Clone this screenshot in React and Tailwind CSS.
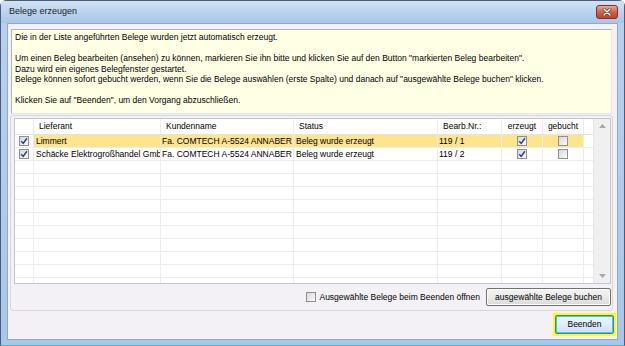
import React from "react";

const rows = [
  {
    lieferant: "Limmert",
    kunde: "Fa. COMTECH A-5524 ANNABER",
    status: "Beleg wurde erzeugt",
    nr: "119 / 1",
    selected: true,
  },
  {
    lieferant: "Schäcke Elektrogroßhandel Gmb",
    kunde: "Fa. COMTECH A-5524 ANNABER",
    status: "Beleg wurde erzeugt",
    nr: "119 / 2",
    selected: false,
  },
];

const emptyRows = [1, 2, 3, 4, 5, 6, 7, 8, 9, 10, 11];

const Check = ({ checked }) => (
  <span className="inline-flex h-[10px] w-[10px] items-center justify-center border border-[#8e8f8f] bg-gradient-to-br from-[#d8d8d8] to-[#fafafa]">
    {checked && (
      <svg viewBox="0 0 8 8" className="h-[8px] w-[8px]">
        <path d="M1.2 4.2 L3.2 6.4 L6.9 1.2" stroke="#24449a" strokeWidth="1.5" fill="none" />
      </svg>
    )}
  </span>
);

const Cell = ({ className, children }) => (
  <div className={"flex h-full shrink-0 items-center overflow-hidden whitespace-nowrap border-r border-[#ececec] " + className}>
    {children}
  </div>
);

const App = () => {
  return (
    <div className="h-[346px] w-[625px] overflow-hidden bg-white font-['Liberation_Sans',Arial,sans-serif] text-[8.5px] text-black">
      <div className="flex h-full w-full flex-col rounded-t-[6px] border border-[#4a5d78] border-b-[#3fb3c9] bg-gradient-to-b from-[#b9d1ee] to-[#a9c6ea]">
        {/* title bar */}
        <div className="flex h-[22px] shrink-0 items-center justify-between bg-gradient-to-b from-[#d3e2f4] via-[#bcd3ef] to-[#a9c5e8] pl-[8px] pr-[6px]">
          <span className="text-[9px] text-[#1b1b1b]">Belege erzeugen</span>
          <div className="flex h-[14px] w-[22px] items-center justify-center rounded-[3px] border border-[#7a3327] bg-gradient-to-b from-[#e9a99b] via-[#d2604b] to-[#c0432e]">
            <svg viewBox="0 0 10 8" className="h-[8px] w-[10px]">
              <path d="M2 1 L8 7 M8 1 L2 7" stroke="#5a2a22" strokeWidth="2.6" strokeLinecap="round" />
              <path d="M2 1 L8 7 M8 1 L2 7" stroke="#ffffff" strokeWidth="1.5" strokeLinecap="round" />
            </svg>
          </div>
        </div>

        {/* client area */}
        <div className="mx-[6px] mb-[5px] flex flex-1 flex-col border border-[#8fa9c9] bg-[#f4f1f6]">
          {/* info box */}
          <div className="ml-[3px] mt-[5px] h-[85px] w-[601px] border border-t-[#b4b4b4] border-l-[#b4b4b4] border-b-[#e6e6e6] border-r-[#e6e6e6] bg-[#ffffe6] pl-[3px] pt-[2px] leading-[10.5px]">
            <p>Die in der Liste angeführten Belege wurden jetzt automatisch erzeugt.</p>
            <p>&nbsp;</p>
            <p>Um einen Beleg bearbeiten (ansehen) zu können, markieren Sie ihn bitte und klicken Sie auf den Button "markierten Beleg bearbeiten".</p>
            <p>Dazu wird ein eigenes Belegfenster gestartet.</p>
            <p>Belege können sofort gebucht werden, wenn Sie die Belege auswählen (erste Spalte) und danach auf "ausgewählte Belege buchen" klicken.</p>
            <p>&nbsp;</p>
            <p>Klicken Sie auf "Beenden", um den Vorgang abzuschließen.</p>
          </div>

          {/* group panel */}
          <div className="ml-[2px] mt-[1px] flex h-[196px] w-[603px] flex-col rounded-[3px] border border-[#d3d8de] pb-[4px] pl-[3px] pr-[1px] pt-[2px]">
            <div className="flex h-[166px] border border-[#c3c7cc] bg-white">
              <div className="flex flex-1 flex-col overflow-hidden">
                {/* header */}
                <div className="flex h-[16px] shrink-0 border-b border-[#e2e2e2]">
                  <Cell className="w-[19px] border-[#e4e4e4]" />
                  <Cell className="w-[127px] border-[#e4e4e4] pl-[5px]">Lieferant</Cell>
                  <Cell className="w-[133px] border-[#e4e4e4] pl-[5px]">Kundenname</Cell>
                  <Cell className="w-[144px] border-[#e4e4e4] pl-[5px]">Status</Cell>
                  <Cell className="w-[64px] border-[#e4e4e4] pl-[5px]">Bearb.Nr.:</Cell>
                  <Cell className="w-[41px] justify-center border-[#e4e4e4]">erzeugt</Cell>
                  <Cell className="w-[41px] justify-center border-[#e4e4e4]">gebucht</Cell>
                  <Cell className="w-[11px] border-[#e4e4e4]" />
                </div>
                {rows.map((row) => (
                  <div key={row.nr} className="flex h-[13px] shrink-0 border-b border-[#ededed]">
                    <Cell className="w-[19px] justify-center">
                      <Check checked />
                    </Cell>
                    <div className={"flex h-full " + (row.selected ? "bg-[#fde48d]" : "")}>
                      <Cell className="w-[127px] pl-[2px]">{row.lieferant}</Cell>
                      <Cell className="w-[133px] pl-[1px]">{row.kunde}</Cell>
                      <Cell className="w-[144px] pl-[2px]">{row.status}</Cell>
                      <Cell className="w-[64px] pl-[1px]">{row.nr}</Cell>
                      <Cell className="w-[41px] justify-center">
                        <Check checked />
                      </Cell>
                      <Cell className="w-[41px] justify-center">
                        <Check checked={false} />
                      </Cell>
                    </div>
                    <Cell className="w-[11px]" />
                  </div>
                ))}
                {emptyRows.map((n) => (
                  <div key={n} className="flex h-[13px] shrink-0 border-b border-[#ededed]">
                    <Cell className="w-[19px]" />
                    <Cell className="w-[127px]" />
                    <Cell className="w-[133px]" />
                    <Cell className="w-[144px]" />
                    <Cell className="w-[64px]" />
                    <Cell className="w-[41px]" />
                    <Cell className="w-[41px]" />
                    <Cell className="w-[11px]" />
                  </div>
                ))}
              </div>
              {/* scrollbar */}
              <div className="flex w-[17px] shrink-0 flex-col items-center justify-between border-l border-[#e6e6e6] bg-[#f0f0f0] py-[5px]">
                <svg viewBox="0 0 7 4" className="h-[4px] w-[7px]">
                  <path d="M0 4 L3.5 0 L7 4 Z" fill="#a8a8a8" />
                </svg>
                <svg viewBox="0 0 7 4" className="h-[4px] w-[7px]">
                  <path d="M0 0 L3.5 4 L7 0 Z" fill="#a8a8a8" />
                </svg>
              </div>
            </div>

            <div className="mt-[4px] flex items-center justify-end">
              <Check checked={false} />
              <span className="ml-[3px] mr-[6px]">Ausgewählte Belege beim Beenden öffnen</span>
              <button className="h-[18px] w-[125px] rounded-[2px] border border-[#707070] bg-gradient-to-b from-[#f3f3f3] via-[#ebebeb] to-[#d9d9d9] text-[8.5px] shadow-[inset_0_0_0_1px_#fcfcfc]">
                ausgewählte Belege buchen
              </button>
            </div>
          </div>

          {/* Beenden */}
          <div className="mr-[1px] mt-[2px] flex justify-end">
            <div className="flex h-[23px] w-[63px] items-center justify-center bg-[#ffff00] p-[2px]">
              <button className="h-full w-full rounded-[2px] border border-[#3c7fb1] bg-gradient-to-b from-[#eaf6fd] via-[#e0eef8] to-[#c9e0f0] text-[8.5px] shadow-[inset_0_0_0_1px_#48c5f2]">
                Beenden
              </button>
            </div>
          </div>
        </div>
      </div>
    </div>
  );
};

export default App;
